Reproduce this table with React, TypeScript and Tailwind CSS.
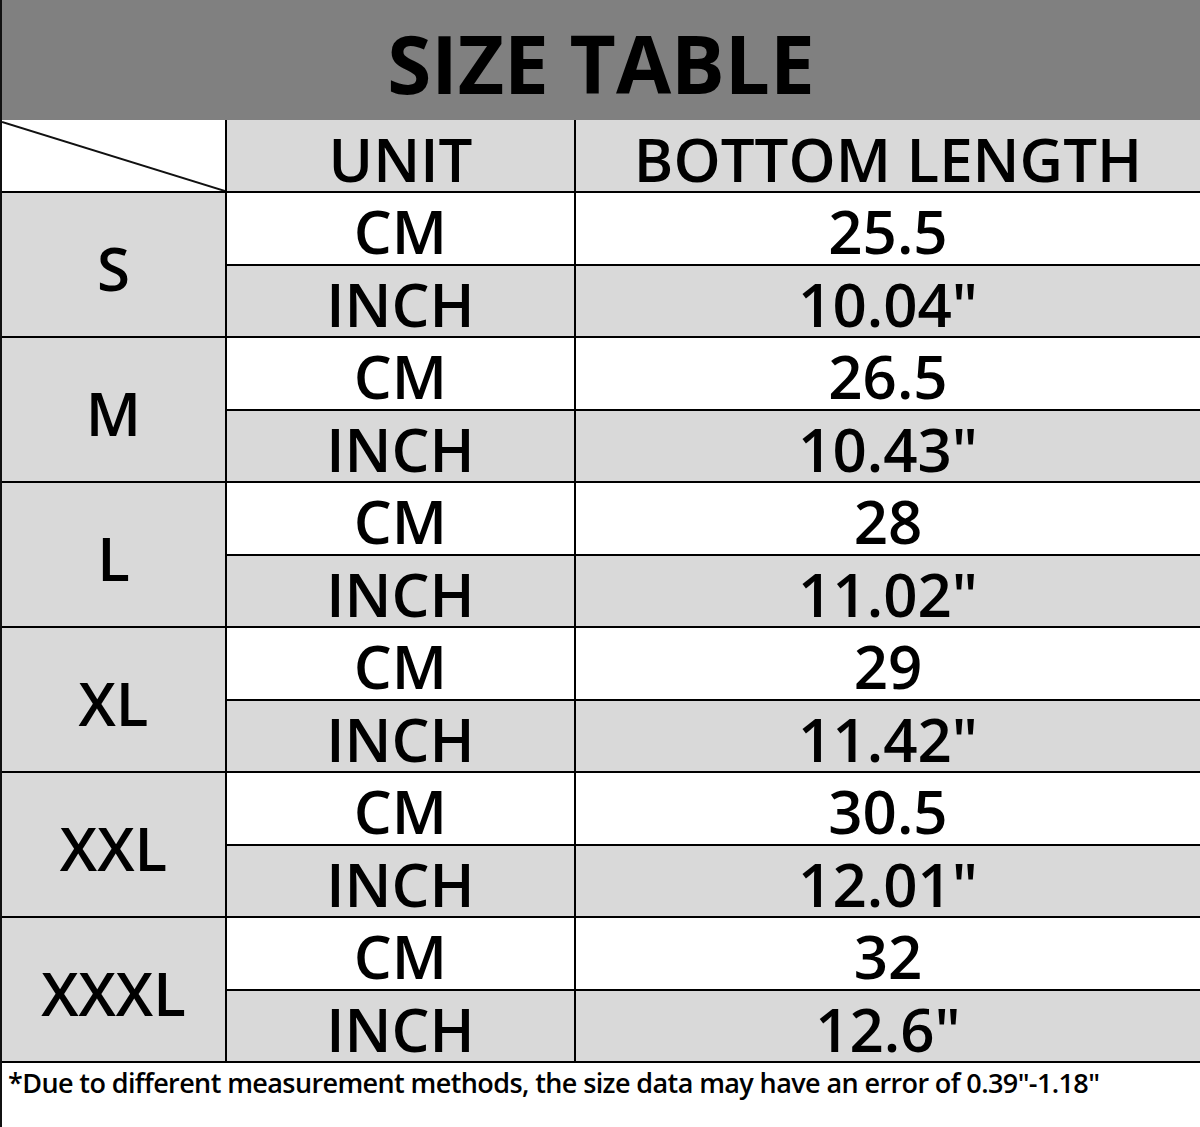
const rows = [
  { size: "S", cm: "25.5", inch: '10.04"' },
  { size: "M", cm: "26.5", inch: '10.43"' },
  { size: "L", cm: "28", inch: '11.02"' },
  { size: "XL", cm: "29", inch: '11.42"' },
  { size: "XXL", cm: "30.5", inch: '12.01"' },
  { size: "XXXL", cm: "32", inch: '12.6"' },
];

const font = { fontFamily: '"Open Sans", "Liberation Sans", sans-serif' };

function SubRow({ unit, value, shaded }: { unit: string; value: string; shaded?: boolean }) {
  return (
    <div className={`flex h-[72.5px] border-b-2 border-black ${shaded ? "bg-[#d9d9d9]" : "bg-white"}`}>
      <div className="flex w-[349px] items-center justify-center border-r-2 border-black pt-[6px] text-[60px] font-semibold leading-none">
        {unit}
      </div>
      <div className="flex flex-1 items-center justify-center pt-[6px] text-[60px] font-semibold leading-none">
        {value}
      </div>
    </div>
  );
}

export default function App() {
  return (
    <div className="w-[1200px] h-[1127px] bg-white text-black border-l-2 border-[#111]" style={font}>
      <div className="flex h-[120px] items-center justify-center bg-[#808080] pt-[6px]">
        <h1 className="text-[80px] font-bold leading-none">SIZE TABLE</h1>
      </div>

      <div className="flex h-[73px] border-b-2 border-black">
        <div className="relative w-[225px] border-r-2 border-black bg-white">
          <svg className="absolute inset-0" width="223" height="71" viewBox="0 0 223 71">
            <line x1="0" y1="2" x2="223" y2="71" stroke="#111" strokeWidth="2" />
          </svg>
        </div>
        <div className="flex w-[349px] items-center justify-center border-r-2 border-black bg-[#d9d9d9] pt-[6px] text-[60px] font-semibold leading-none">
          UNIT
        </div>
        <div className="flex flex-1 items-center justify-center bg-[#d9d9d9] pt-[6px] text-[60px] font-semibold leading-none">
          BOTTOM LENGTH
        </div>
      </div>

      {rows.map((r) => (
        <div key={r.size} className="flex">
          <div className="flex w-[225px] items-center justify-center border-r-2 border-b-2 border-black bg-[#d9d9d9] pt-[6px] text-[60px] font-semibold leading-none">
            {r.size}
          </div>
          <div className="flex-1">
            <SubRow unit="CM" value={r.cm} />
            <SubRow unit="INCH" value={r.inch} shaded />
          </div>
        </div>
      ))}

      <p className="pl-[6px] pt-[6px] text-[27px] font-semibold leading-none tracking-[-0.6px]">
        *Due to different measurement methods, the size data may have an error of 0.39"-1.18"
      </p>
    </div>
  );
}
